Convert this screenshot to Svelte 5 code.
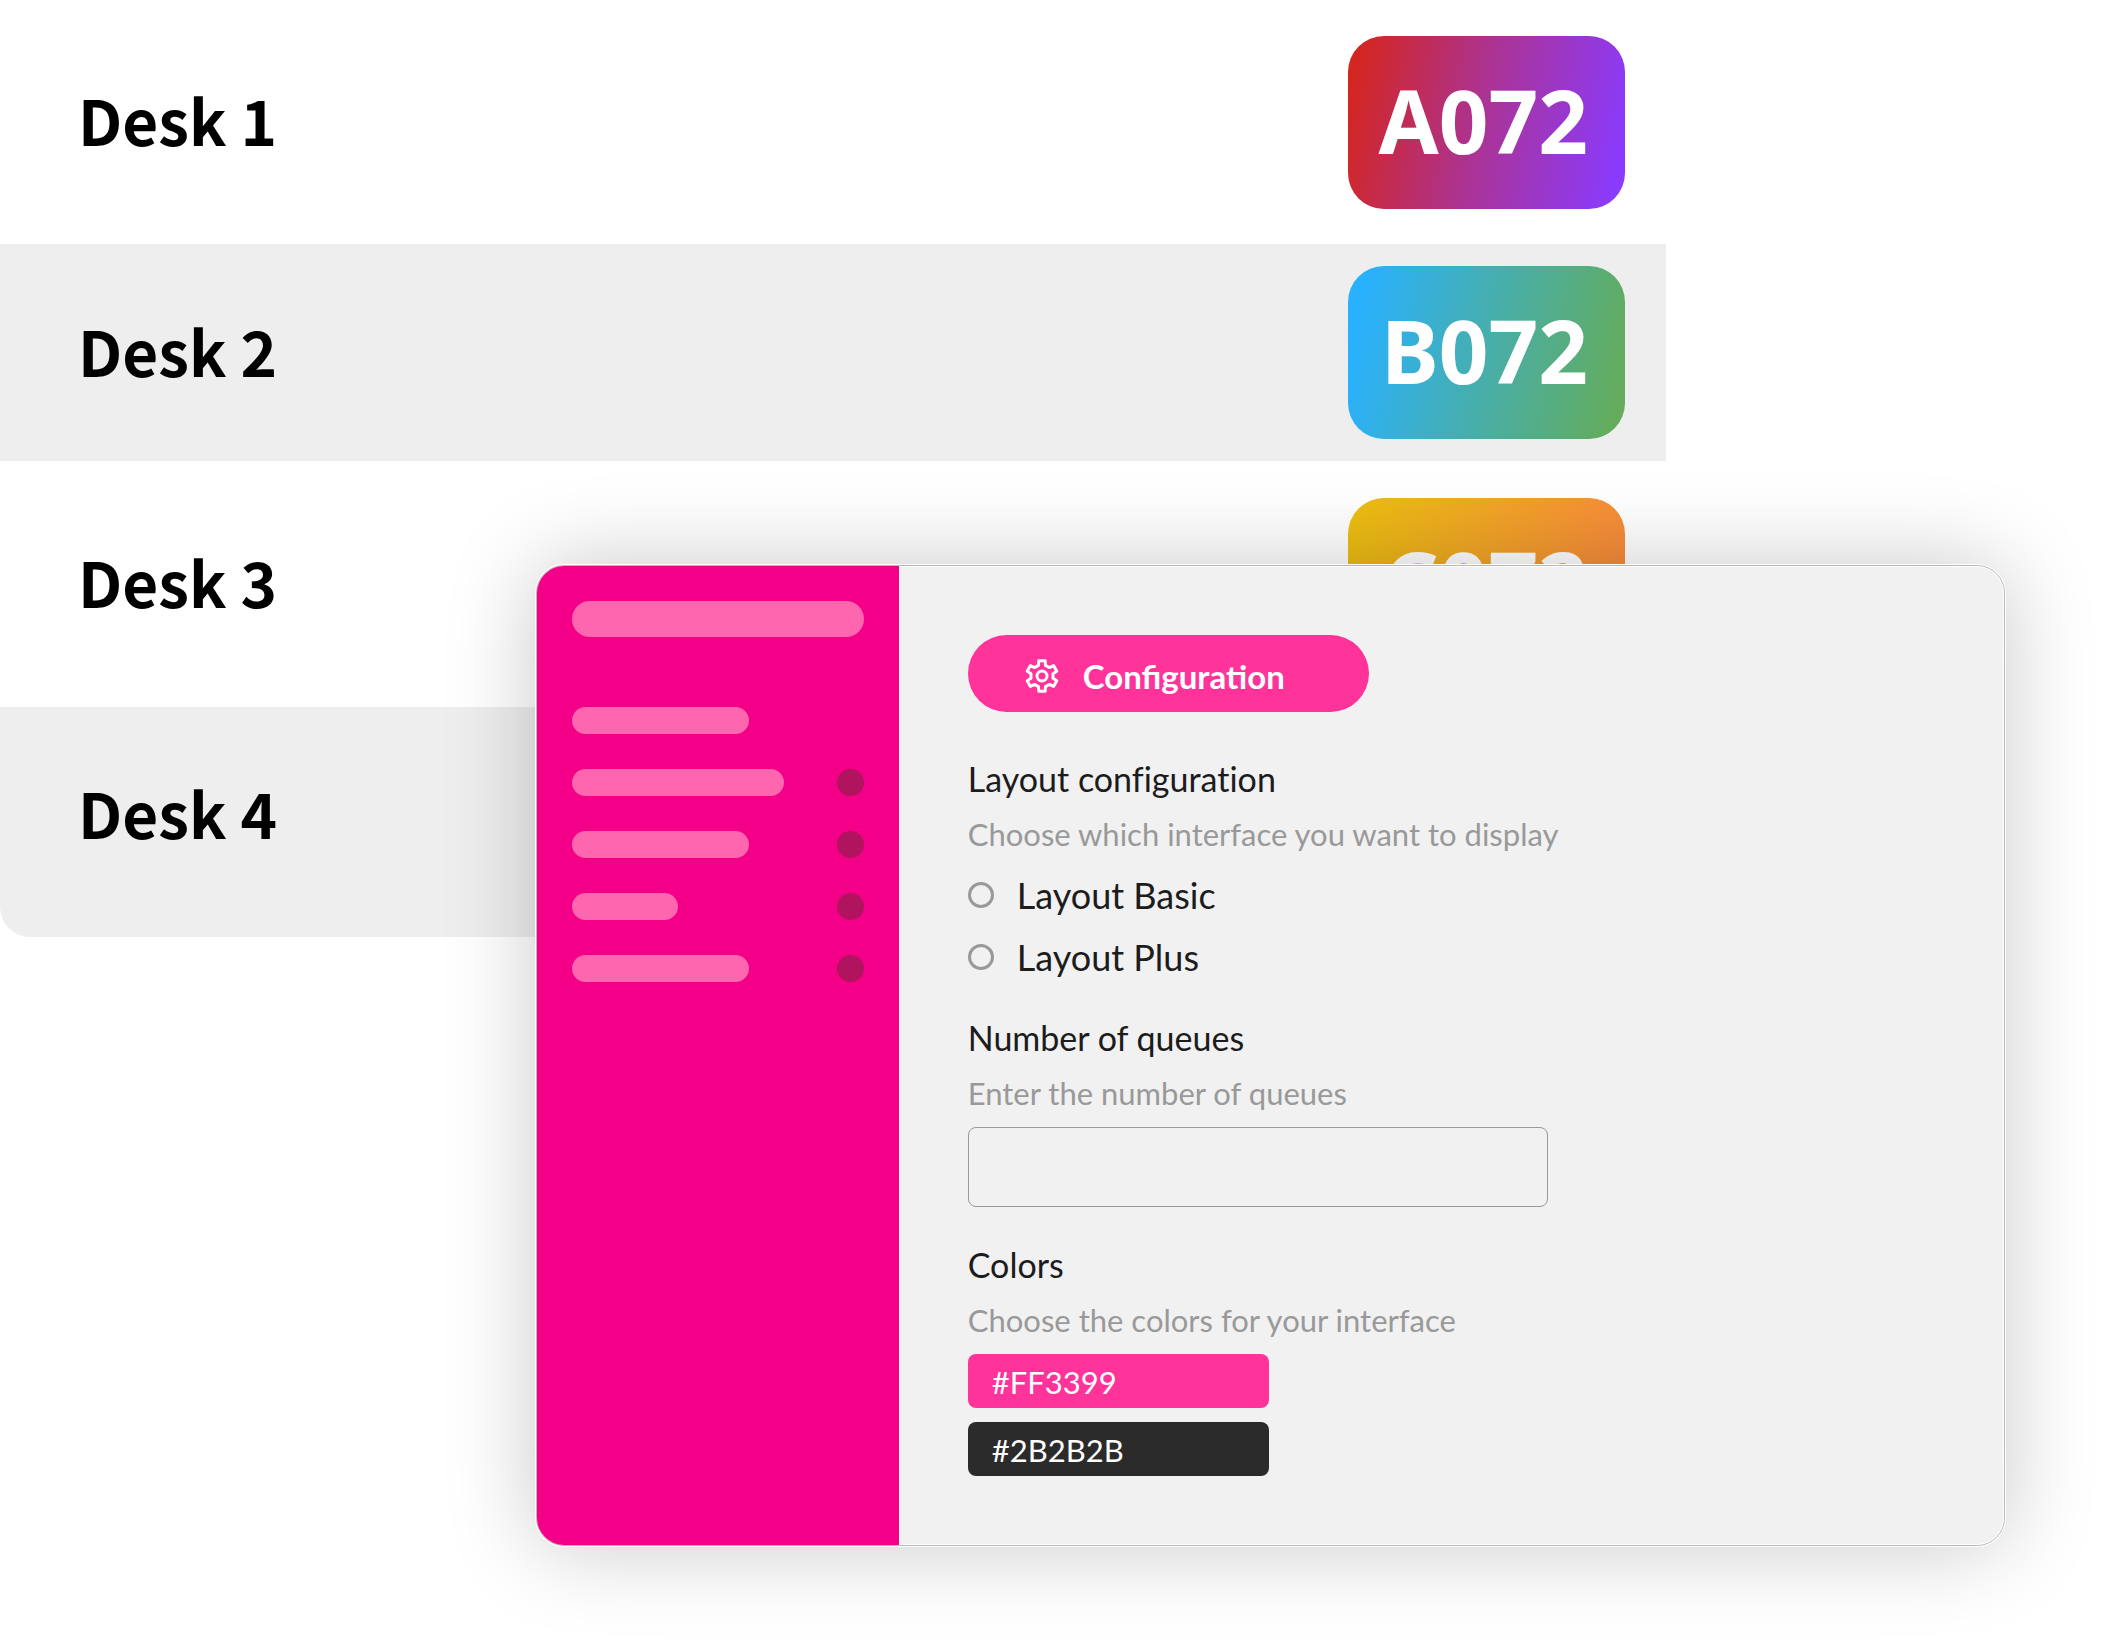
<script>
  let layout = $state("");
  let queues = $state("");

  const desks = [
    { name: "Desk 1", ticket: "A072", tone: "red" },
    { name: "Desk 2", ticket: "B072", tone: "blue" },
    { name: "Desk 3", ticket: "C072", tone: "amber" },
    { name: "Desk 4", ticket: "", tone: "" },
  ];

  // SIDEBAR PLACEHOLDERS
  const items = [
    { width: 177, dot: false },
    { width: 212, dot: true },
    { width: 177, dot: true },
    { width: 106, dot: true },
    { width: 177, dot: true },
  ];

  const layouts = ["Layout Basic", "Layout Plus"];
</script>

<div class="page">
  <ul class="desks">
    {#each desks as desk (desk.name)}
      <li>
        <span class="name">{desk.name}</span>
        {#if desk.ticket}
          <span class="ticket {desk.tone}">{desk.ticket}</span>
        {/if}
      </li>
    {/each}
  </ul>

  <section class="panel">
    <aside>
      <div class="bar title"></div>
      {#each items as item}
        <div class="item">
          <div class="bar" style="width: {item.width}px"></div>
          {#if item.dot}<div class="dot"></div>{/if}
        </div>
      {/each}
    </aside>

    <form class="settings">
      <button type="button" class="config">
        <svg viewBox="0 0 34 34" width="34" height="34" aria-hidden="true">
          <path
            d="M13.5 6.4 13.8 1.8H20.2L20.5 6.4 24.5 8.6 28.6 6.6 31.8 12.2 28 14.7V19.3L31.8 21.8 28.6 27.4 24.5 25.4 20.5 27.6 20.2 32.2H13.8L13.5 27.6 9.5 25.4 5.4 27.4 2.2 21.8 6 19.3V14.7L2.2 12.2 5.4 6.6 9.5 8.6Z" />
          <circle cx="17" cy="17" r="5" />
        </svg>
        Configuration
      </button>

      <fieldset>
        <legend class="heading">Layout configuration</legend>
        <p>Choose which interface you want to display</p>
        <div class="options">
          {#each layouts as name}
            <label class="option">
              <input type="radio" name="layout" value={name} bind:group={layout} />
              {name}
            </label>
          {/each}
        </div>
      </fieldset>

      <div class="field">
        <label class="heading" for="queues">Number of queues</label>
        <p>Enter the number of queues</p>
        <input id="queues" class="box" type="text" bind:value={queues} />
      </div>

      <div class="field">
        <h2 class="heading">Colors</h2>
        <p>Choose the colors for your interface</p>
        <div class="swatches">
          <button type="button" class="swatch pink">#FF3399</button>
          <button type="button" class="swatch dark">#2B2B2B</button>
        </div>
      </div>
    </form>
  </section>
</div>

<style>
  :global(body) {
    background: #fff;
  }

  .page {
    display: grid;
    font-family: Lato, "Open Sans", sans-serif;
    font-variant-ligatures: none;
    color: #1c1c1c;
  }

  .desks,
  .panel {
    grid-area: 1 / 1;
  }

  /* DESKS */
  .desks {
    align-self: start;
    width: 79.3%;
    margin: 0;
    padding: 0;
    list-style: none;
  }
  .desks li {
    display: flex;
    align-items: center;
    justify-content: space-between;
    box-sizing: border-box;
    height: 244px;
    padding: 0 41px 0 78px;
  }
  .desks li:nth-child(even) {
    background: #eee;
    height: 217px;
  }
  .desks li:nth-child(3) {
    height: 246px;
  }
  .desks li:last-child {
    height: 230px;
    padding-bottom: 14px;
    border-radius: 0 0 30px 30px;
  }
  .name {
    padding-bottom: 6px;
    font: 700 62px "Noto Sans CJK SC", sans-serif;
    color: #000;
  }
  .ticket {
    box-sizing: border-box;
    width: 277px;
    padding: 0 37px 5px 0;
    border-radius: 36px;
    color: #fff;
    font: 700 87px/168px "Noto Sans", sans-serif;
    text-align: right;
  }
  .red {
    background: linear-gradient(102deg, #d42620 4%, #ab3394 48%, #8a3bff 96%);
  }
  .blue {
    background: linear-gradient(102deg, #29b1ff 6%, #47aeab 50%, #64ac5b 96%);
  }
  .amber {
    background: linear-gradient(102deg, #ecbd12 4%, #f78c3a 90%);
  }

  /* PANEL */
  .panel {
    display: flex;
    margin: 565px 96px 96px 25.5%;
    border: 1px solid #b8b8b8;
    border-radius: 28px;
    overflow: hidden;
    background: #f1f1f1;
    box-shadow: 0 0 0 1px #fff, 0 0 90px rgba(0, 0, 0, 0.22);
  }

  aside {
    flex: none;
    width: 292px;
    padding: 35px;
    background: #f40088;
  }
  .bar {
    height: 27px;
    border-radius: 18px;
    background: #ff66b0;
  }
  .title {
    height: 36px;
    margin-bottom: 70px;
  }
  .item {
    display: flex;
    justify-content: space-between;
    margin-bottom: 35px;
  }
  .dot {
    width: 27px;
    height: 27px;
    border-radius: 50%;
    background: #b0145e;
  }

  .settings {
    flex: 1;
    padding: 69px;
    border-radius: 0 27px 27px 0;
    box-shadow: inset 0 0 0 1px #fff;
  }
  .settings button {
    border: 0;
    font-family: inherit;
    color: #fff;
    cursor: pointer;
  }
  .config {
    display: flex;
    align-items: center;
    gap: 24px;
    width: 401px;
    height: 77px;
    padding: 4px 57px 0;
    border-radius: 39px;
    background: #ff3399;
    font-size: 33px;
    font-weight: 700;
  }
  svg {
    fill: none;
    stroke: currentColor;
    stroke-width: 3;
    stroke-linejoin: round;
  }

  fieldset {
    margin: 9px 0 0;
    padding: 0;
    border: 0;
  }
  .heading {
    display: block;
    margin: 0;
    padding: 34px 0 0;
    font-size: 34px;
    font-weight: 400;
    line-height: 48px;
  }
  p {
    margin: 0;
    padding: 7px 0 10px;
    color: #999;
    font-size: 31px;
    line-height: 48px;
  }
  .options {
    display: grid;
    gap: 16px;
    padding-top: 4px;
  }
  .option {
    display: flex;
    align-items: center;
    gap: 23px;
    font-size: 36px;
    line-height: 46px;
  }
  .option input {
    appearance: none;
    width: 26px;
    height: 26px;
    margin: 0;
    border: 3px solid #999;
    border-radius: 50%;
  }
  .box {
    display: block;
    box-sizing: border-box;
    width: 580px;
    height: 80px;
    padding: 0 24px;
    border: 1px solid #999;
    border-radius: 8px;
    background: transparent;
    font: inherit;
    font-size: 31px;
  }
  .swatches {
    display: grid;
    gap: 14px;
  }
  .swatch {
    width: 301px;
    height: 54px;
    padding: 2px 24px 0;
    border-radius: 8px;
    font-size: 31px;
    text-align: left;
  }
  .pink {
    background: #ff3399;
  }
  .dark {
    background: #2b2b2b;
  }
</style>
